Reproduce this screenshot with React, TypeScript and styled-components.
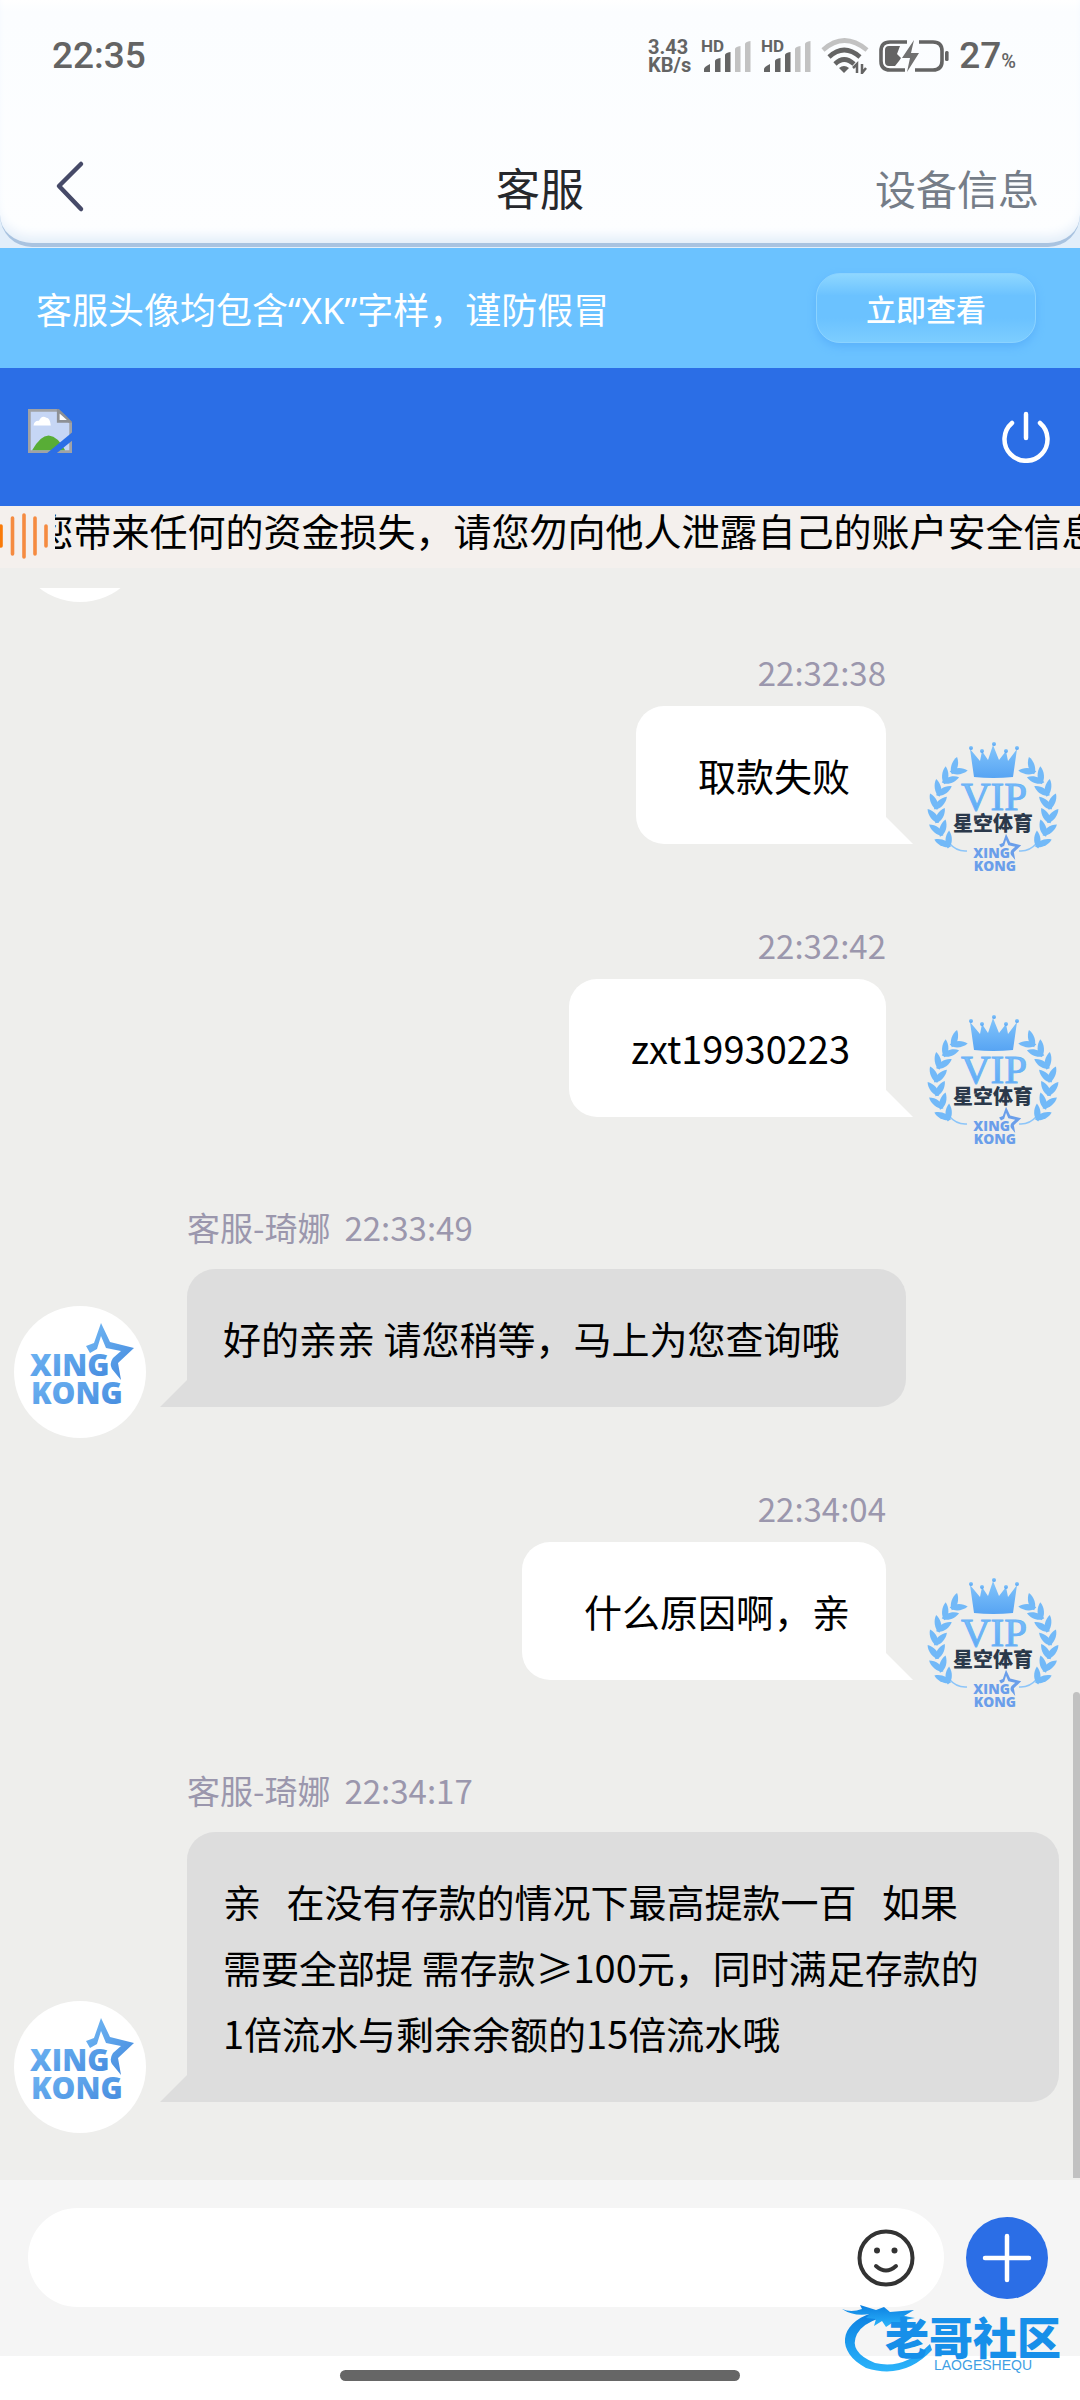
import React from "react";
import styled, { createGlobalStyle } from "styled-components";

const cjk = `"Noto Sans CJK SC", sans-serif`;

const GlobalStyle = createGlobalStyle`
  *, *::before, *::after { box-sizing: border-box; }
  body { margin: 0; background: #ffffff; font-family: ${cjk}; }
  button, input { font: inherit; color: inherit; border: 0; background: none; padding: 0; }
  button { cursor: pointer; }
  svg { display: block; flex: none; }
`;

const Shell = styled.div`
  display: flex;
  flex-direction: column;
  height: 100vh;
  background: #ffffff;
`;

/* ---------- header ---------- */

const HeaderBack = styled.div`
  flex: none;
  background: #e2eefa;
  padding-bottom: 1px;
`;

const Header = styled.header`
  background: linear-gradient(#ffffff, #fbfdff 12px, #fdfeff 100%);
  border-bottom: 4px solid #a9c3e0;
  border-radius: 0 0 32px 32px;
  box-shadow: inset 0 -12px 12px -6px #e2edf9;
`;

const StatusBar = styled.div`
  display: flex;
  align-items: center;
  height: 124px;
  padding: 0 64px 13px 52px;
  color: #646464;
  font-family: Roboto, sans-serif;
  font-weight: 500;
`;

const Clock = styled.span`
  flex: 1;
  font-size: 37px;
`;

const StatusIcons = styled.div`
  display: flex;
  align-items: center;
  gap: 10px;
`;

const NetSpeed = styled.span`
  display: flex;
  flex-direction: column;
  font-size: 20px;
  line-height: 18px;
  font-weight: 700;
`;

const BatteryLevel = styled.span`
  font-size: 37px;
  small { font-size: 20px; }
`;

const NavBar = styled.nav`
  display: grid;
  grid-template-columns: 1fr auto 1fr;
  align-items: center;
  height: 119px;
  padding: 6px 41px 0;
`;

const BackButton = styled.button`
  justify-self: start;
  padding: 0 10px;
`;

const Title = styled.h1`
  margin: 0;
  font-size: 44px;
  line-height: 64px;
  font-weight: 400;
  color: #26282c;
`;

const DeviceLink = styled.a`
  justify-self: end;
  font-size: 41px;
  line-height: 64px;
  color: #757d88;
  text-decoration: none;
`;

/* ---------- banners ---------- */

const Warning = styled.section`
  flex: none;
  display: flex;
  align-items: center;
  justify-content: space-between;
  height: 120px;
  padding: 0 44px 0 36px;
  background: #6bc2ff;
  color: #ffffff;
  font-size: 36px;
`;

const Latin = styled.span`
  font-family: "Noto Sans", sans-serif;
`;

const CheckButton = styled.button`
  width: 220px;
  height: 70px;
  border-radius: 24px;
  border: 1px solid #8bd3ff;
  background: linear-gradient(#8ed7ff, #6bc2ff 32%, #6bc2ff 65%, #7ccdff);
  box-shadow: 0 4px 8px #5bb2fb;
  font-size: 30px;
  font-weight: 500;
  color: #ffffff;
`;

const BrandBar = styled.section`
  flex: none;
  display: flex;
  align-items: center;
  justify-content: space-between;
  height: 138px;
  padding: 0 28px;
  background: #2b6ee6;
`;

const LogoSlot = styled.div`
  height: 56px;
`;

const Marquee = styled.section`
  flex: none;
  display: flex;
  align-items: flex-start;
  gap: 7px;
  height: 62px;
  background: #f4f0ed;
  color: #000000;
`;

const MarqueeIcon = styled.span`
  padding-top: 7px;
`;

const MarqueeText = styled.span`
  flex: 1;
  min-width: 0;
  display: flex;
  justify-content: center;
  overflow: hidden;
  white-space: nowrap;
  font-size: 38px;
  line-height: 48px;
`;

/* ---------- conversation ---------- */

const ChatArea = styled.main`
  position: relative;
  flex: 1;
  min-height: 0;
  display: flex;
  flex-direction: column;
  padding-top: 20px;
  background: #eeeeec;
`;

const Thread = styled.div`
  flex: 1;
  min-height: 0;
  display: flex;
  flex-direction: column-reverse;
  overflow-y: auto;
  scrollbar-width: none;
`;

const MessageList = styled.ol`
  flex: none;
  display: flex;
  flex-direction: column;
  gap: 46px;
  margin: 0;
  padding: 0 21px 47px 14px;
  list-style: none;
`;

const ScrollThumb = styled.div`
  position: absolute;
  right: 0;
  bottom: 2px;
  width: 7px;
  height: 486px;
  border-radius: 4px 4px 0 0;
  background: #c1c1c1;
`;

const Row = styled.li<{ $mine?: boolean }>`
  display: flex;
  flex-direction: ${(p) => (p.$mine ? "row-reverse" : "row")};
  align-items: flex-end;
  gap: 41px;
`;

const Content = styled.div<{ $mine?: boolean }>`
  display: flex;
  flex-direction: column;
  align-items: ${(p) => (p.$mine ? "flex-end" : "flex-start")};
  gap: ${(p) => (p.$mine ? 10 : 18)}px;
  min-width: 0;
  padding: ${(p) => (p.$mine ? 0 : 9)}px 0 31px;
`;

const Meta = styled.div`
  display: flex;
  gap: 14px;
  font-size: 33px;
  line-height: 48px;
  color: #9b97ad;
`;

const Bubble = styled.p<{ $mine?: boolean }>`
  position: relative;
  margin: 0;
  padding: 36px ${(p) => (p.$mine ? "36px 36px 62px" : "66px 36px 36px")};
  border-radius: ${(p) => (p.$mine ? "28px 28px 0 28px" : "28px 28px 28px 0")};
  background: ${(p) => (p.$mine ? "#ffffff" : "#dddddd")};
  color: #000000;
  font-size: 38px;
  line-height: 66px;
  white-space: pre-wrap;

  &::after {
    content: "";
    position: absolute;
    bottom: 0;
    ${(p) => (p.$mine ? "left: 100%" : "right: 100%")};
    width: 27px;
    height: 27px;
    background: inherit;
    clip-path: polygon(${(p) => (p.$mine ? "0 0, 100% 100%, 0 100%" : "100% 0, 100% 100%, 0 100%")});
  }
`;

const AgentAvatar = styled.span`
  flex: none;
  width: 132px;
  height: 132px;
  border-radius: 50%;
  background: #ffffff;
`;

const VipAvatar = styled.span`
  flex: none;
  width: 132px;
  height: 132px;
`;

/* ---------- composer ---------- */

const Composer = styled.form`
  flex: none;
  display: flex;
  align-items: center;
  gap: 22px;
  height: 176px;
  padding: 28px 32px 49px 28px;
  background: #f5f5f5;
`;

const InputPill = styled.div`
  flex: 1;
  display: flex;
  align-items: center;
  height: 99px;
  padding: 0 29px 0 36px;
  border-radius: 50px;
  background: #ffffff;
`;

const MessageInput = styled.input`
  flex: 1;
  min-width: 0;
  height: 66px;
  font-size: 38px;
  outline: none;
`;

const AddButton = styled.button`
  display: grid;
  place-items: center;
  width: 82px;
  height: 82px;
  border-radius: 50%;
  background: #2b6ee6;
`;

const HomeArea = styled.footer`
  position: relative;
  flex: none;
  display: flex;
  justify-content: center;
  height: 44px;
  padding-top: 14px;
  background: #ffffff;
`;

const HomeIndicator = styled.div`
  width: 37%;
  height: 11px;
  border-radius: 6px;
  background: #666666;
`;

const Watermark = styled.div`
  position: absolute;
  right: 16px;
  bottom: 24px;
  display: flex;
  pointer-events: none;
`;

/* ---------- drawings ---------- */

const Signal = () => (
  <svg width="50" height="40" viewBox="0 -2 50 40" overflow="visible" aria-hidden="true">
    <text x="0" y="14" fontFamily="Roboto, sans-serif" fontWeight="700" fontSize="17" fill="#646464">HD</text>
    <g fill="#646464">
      <path d="M3 34V31Q3 29 9 26V34Z" />
      <path d="M14 34V23Q14 21 19.500 20V34Z" />
      <path d="M24 34V17Q24 15 29.500 14V34Z" />
    </g>
    <g fill="#c2c2c2">
      <path d="M34 34V11Q34 9 39.500 8V34Z" />
      <path d="M44 34V6Q44 4 49.500 3V34Z" />
    </g>
  </svg>
);

const Wifi = () => (
  <svg width="48" height="36" viewBox="0 0 48 36" fill="none" strokeWidth="4.600" aria-hidden="true">
    <path d="M2 12Q23 -7 46 12" stroke="#c2c2c2" />
    <path d="M8 19Q23 5 39 19" stroke="#646464" />
    <path d="M14 26Q23 17 33 26" stroke="#646464" />
    <path d="M18 30Q23 26 28 30L23 35Z" fill="#646464" stroke="none" />
    <path d="M36 35V26L32 30M41 26V35L45 30" stroke="#646464" strokeWidth="2.500" />
  </svg>
);

const Battery = () => (
  <svg width="70" height="34" viewBox="0 0 70 34" aria-hidden="true">
    <path d="M28 3H11Q2 3 2 12V22Q2 31 11 31H26M40 3H54Q63 3 63 12V22Q63 31 54 31H36" fill="none" stroke="#646464" strokeWidth="3.600" />
    <path d="M10 7H21L18 15L22 19L20 22L16 27H10Q6 27 6 23V11Q6 7 10 7Z" fill="#646464" />
    <path d="M35 1L23 19H31L28 33L40 14H32Z" fill="#707070" />
    <rect x="66" y="12" width="3.600" height="10" rx="1.500" fill="#646464" />
  </svg>
);

const BrokenImage = () => (
  <svg width="44" height="44" viewBox="0 0 16 16" role="img" aria-label="logo">
    <path d="M0.500 0.500H11L15.500 5V15.500H0.500Z" fill="#c6d6f5" stroke="#a0a2a6" />
    <path d="M2 6Q2.200 4.200 4 4.300Q5 2 6.700 3.200Q8 3.300 8.300 6Z" fill="#fff" />
    <path d="M1.500 15Q4.500 9.600 7.500 9.600Q11 10 13.500 15Z" fill="#58ad36" />
    <path d="M11 0.500V4.500H15.500Z" fill="#fff" stroke="#8d9095" />
    <path d="M16 8.500L7 16H10.500L16 11.500Z" fill="#2b6ee6" />
    <path d="M16 -0.200H11.200L16 4.600Z" fill="#2b6ee6" />
  </svg>
);

const Power = () => (
  <svg width="52" height="52" viewBox="0 0 52 52" fill="none" stroke="#fff" strokeWidth="4.500" strokeLinecap="round" aria-hidden="true">
    <path d="M26 3V27M12 12A21.500 21.500 0 1 0 40 12" />
  </svg>
);

const SoundBars = () => (
  <svg width="48" height="46" viewBox="0 0 48 46" stroke="#f58b40" strokeWidth="3.600" strokeLinecap="round" aria-hidden="true">
    <path d="M1 13V33" stroke="#f97a08" />
    <path d="M12.500 5V41M24 2V44M35 5V41M46 13V33" />
  </svg>
);

const XingKong = ({ gradient, transform }: { gradient: string; transform?: string }) => (
  <g transform={transform} fill={gradient} fontFamily="'Open Sans', sans-serif" fontWeight="800" fontSize="30">
    <text x="16" y="70">XING</text>
    <text x="17" y="98">KONG</text>
    <path d="M87 17L96 36L120 42L104 57L107 74L98 63Q95 58 99 52L107 45L92 42L87 30L83 43L76 47L72 40L80 37Z" />
  </g>
);

const AgentLogo = () => (
  <svg width="132" height="132" viewBox="0 0 132 132" role="img" aria-label="XING KONG">
    <defs>
      <linearGradient id="agentBlue" x1="0" y1="0" x2="1" y2="1">
        <stop offset="0" stopColor="#72b8f4" />
        <stop offset="1" stopColor="#4288dd" />
      </linearGradient>
    </defs>
    <XingKong gradient="url(#agentBlue)" />
  </svg>
);

const leafSteps = [45, 58, 72, 86, 100, 114, 128];

const Branch = ({ transform }: { transform?: string }) => (
  <g transform={transform} fill="#72b9f8">
    <path d="M22 100Q30 109 40 108" fill="none" stroke="#8cc5f9" strokeWidth="1.500" />
    {leafSteps.map((deg) => {
      const a = (deg * Math.PI) / 180;
      const x = 66 - 57 * Math.sin(a);
      const y = 68 - 56 * Math.cos(a);
      return [-28, 42].map((tilt) => (
        <path
          key={`${deg}${tilt}`}
          d="M0 3C5 -1 4 -10 0 -15C-4 -10 -4 -1 0 3Z"
          transform={`translate(${x} ${y}) rotate(${90 - deg + tilt})`}
        />
      ));
    })}
  </g>
);

const VipLogo = () => (
  <svg width="132" height="132" viewBox="0 0 132 132" overflow="visible" role="img" aria-label="VIP">
    <defs>
      <linearGradient id="vipBlue" x1="0" y1="0" x2="0" y2="1">
        <stop offset="0" stopColor="#83c5fb" />
        <stop offset="1" stopColor="#57a4f3" />
      </linearGradient>
    </defs>
    <Branch />
    <Branch transform="translate(132 0) scale(-1 1)" />
    <g fill="url(#vipBlue)">
      <path d="M43 6L53 18L55 8L61 17L66 2L72 17L79 8L81 18L90 6L86 34Q66 36 47 34Z" />
      <circle cx="44" cy="5" r="2" />
      <circle cx="55" cy="8" r="2" />
      <circle cx="67" cy="1" r="2" />
      <circle cx="79" cy="8" r="2" />
      <circle cx="90" cy="5" r="2" />
    </g>
    <text x="67" y="67" textAnchor="middle" fontFamily="'Liberation Serif', serif" fontSize="41" fill="url(#vipBlue)" stroke="#6ab2f7">VIP</text>
    <text x="66" y="88" textAnchor="middle" fontFamily={cjk} fontWeight="900" fontSize="20" fill="#2b394b">星空体育</text>
    <XingKong gradient="#6a9eea" transform="translate(39 83) scale(.46)" />
  </svg>
);

const CommunityLogo = () => (
  <svg width="222" height="72" viewBox="0 0 222 72" overflow="visible" role="img" aria-label="老哥社区">
    <defs>
      <linearGradient id="communityBlue" x1="0" y1="0" x2="0" y2="1">
        <stop offset="0" stopColor="#0c7fe0" />
        <stop offset="1" stopColor="#2bb4fb" />
      </linearGradient>
    </defs>
    <g fill="url(#communityBlue)">
      <path d="M30 9C-4 20 -6 48 24 64Q62 76 90 46L88 40Q62 66 33 59Q6 48 15 30Q20 20 38 14Z" />
      <path d="M0 5Q9 9 20 5L18 1L34 6L42 3L48 8L72 6L62 12L73 14L58 17L70 19L50 19L44 23L40 17L32 22L34 15L24 14L28 10Q12 13 0 5Z" />
    </g>
    <text x="43" y="51" fontFamily={cjk} fontWeight="900" fontSize="44" fill="#178fe9">老哥社区</text>
    <text x="92" y="66" fontFamily="'Liberation Sans', Arial, sans-serif" fontSize="14" fill="#3f9fe4">LAOGESHEQU</text>
  </svg>
);

const Smile = () => (
  <svg width="58" height="58" viewBox="0 0 58 58" fill="none" stroke="#333" strokeWidth="4" strokeLinecap="round" aria-hidden="true">
    <circle cx="29" cy="29" r="26.500" />
    <path d="M19 37Q29 46 39 37" />
    <circle cx="20" cy="21.500" r="3" fill="#333" stroke="none" />
    <circle cx="37.500" cy="21.500" r="3" fill="#333" stroke="none" />
  </svg>
);

/* ---------- data ---------- */

type Message = { mine?: boolean; author?: string; time: string; text: string };

const messages: Message[] = [
  { mine: true, time: "22:32:38", text: "取款失败" },
  { mine: true, time: "22:32:42", text: "zxt19930223" },
  { author: "客服-琦娜", time: "22:33:49", text: "好的亲亲 请您稍等，马上为您查询哦" },
  { mine: true, time: "22:34:04", text: "什么原因啊，亲" },
  {
    author: "客服-琦娜",
    time: "22:34:17",
    text: "亲   在没有存款的情况下最高提款一百   如果需要全部提 需存款≥100元，同时满足存款的1倍流水与剩余余额的15倍流水哦",
  },
];

const MessageRow = ({ mine, author, time, text }: Message) => (
  <Row $mine={mine}>
    {mine ? <VipAvatar><VipLogo /></VipAvatar> : <AgentAvatar><AgentLogo /></AgentAvatar>}
    <Content $mine={mine}>
      <Meta>
        {author && <span>{author}</span>}
        <time>{time}</time>
      </Meta>
      <Bubble $mine={mine}>{text}</Bubble>
    </Content>
  </Row>
);

export default function App() {
  return (
    <Shell lang="zh-CN">
      <GlobalStyle />
      <HeaderBack>
        <Header>
          <StatusBar>
            <Clock>22:35</Clock>
            <StatusIcons>
              <NetSpeed>
                <span>3.43</span>
                <span>KB/s</span>
              </NetSpeed>
              <Signal />
              <Signal />
              <Wifi />
              <Battery />
              <BatteryLevel>27<small>%</small></BatteryLevel>
            </StatusIcons>
          </StatusBar>
          <NavBar>
            <BackButton type="button" aria-label="返回">
              <svg width="36" height="54" viewBox="0 0 36 54" fill="none" stroke="#464a68" strokeWidth="4.500" strokeLinecap="round" strokeLinejoin="round">
                <path d="M30 4L8 26L30 49" />
              </svg>
            </BackButton>
            <Title>客服</Title>
            <DeviceLink href="#device">设备信息</DeviceLink>
          </NavBar>
        </Header>
      </HeaderBack>

      <Warning>
        <span>客服头像均包含<Latin>“XK”</Latin>字样，谨防假冒</span>
        <CheckButton type="button">立即查看</CheckButton>
      </Warning>

      <BrandBar>
        <LogoSlot><BrokenImage /></LogoSlot>
        <button type="button" aria-label="退出"><Power /></button>
      </BrandBar>

      <Marquee>
        <MarqueeIcon><SoundBars /></MarqueeIcon>
        <MarqueeText>您带来任何的资金损失，请您勿向他人泄露自己的账户安全信息</MarqueeText>
      </Marquee>

      <ChatArea>
        <Thread>
          <MessageList>
            <Row><AgentAvatar /></Row>
            {messages.map((m) => <MessageRow key={m.time} {...m} />)}
          </MessageList>
        </Thread>
        <ScrollThumb />
      </ChatArea>

      <Composer>
        <InputPill>
          <MessageInput type="text" aria-label="输入消息" />
          <button type="button" aria-label="表情"><Smile /></button>
        </InputPill>
        <AddButton type="button" aria-label="更多">
          <svg width="50" height="50" viewBox="0 0 50 50" stroke="#fff" strokeWidth="4.500" strokeLinecap="round">
            <path d="M25 3V47M3 25H47" />
          </svg>
        </AddButton>
      </Composer>

      <HomeArea>
        <HomeIndicator />
        <Watermark><CommunityLogo /></Watermark>
      </HomeArea>
    </Shell>
  );
}
